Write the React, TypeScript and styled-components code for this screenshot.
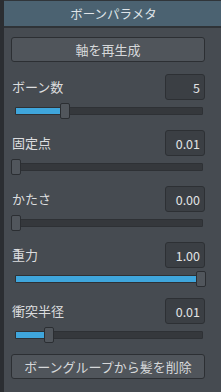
import React from 'react';
import styled, {createGlobalStyle} from 'styled-components';

const GlobalStyle = createGlobalStyle`
  html, body {
    margin: 0;
    padding: 0;
    background: #464b51;
  }
  body {
    font-family: "Noto Sans CJK JP", "Noto Sans", sans-serif;
  }
  * {
    box-sizing: border-box;
  }
`;

const Screen = styled.div`
  display: flex;
  width: 221px;
  height: 392px;
  overflow: hidden;
  background: #464b51;
`;

const SideStrip = styled.div`
  width: 4px;
  flex-shrink: 0;
  background: #2b2e32;
`;

const Panel = styled.div`
  flex: 1;
  display: flex;
  flex-direction: column;
`;

const Header = styled.div`
  height: 28px;
  border-top: 1px solid #30353a;
  border-bottom: 2px solid #2f3337;
  background: #4b6271;
  color: #dfe4e8;
  font-size: 12.5px;
  display: flex;
  align-items: center;
  justify-content: center;
  padding-left: 2px;
`;

const Body = styled.div`
  display: flex;
  flex-direction: column;
  padding: 9px 16px 0 7px;
`;

const ActionButton = styled.button<{$top?: number}>`
  height: 25px;
  margin-top: ${(p) => p.$top ?? 0}px;
  margin-bottom: 1px;
  background: #50555b;
  border: 1px solid #2c2f33;
  border-radius: 3px;
  color: #d6d8da;
  font-family: inherit;
  font-size: 13px;
  padding: 0;
`;

const Field = styled.div`
  display: flex;
  flex-direction: column;
  margin-top: 11px;
`;

const FieldHead = styled.div`
  display: flex;
  align-items: center;
  justify-content: space-between;
`;

const Label = styled.span`
  color: #dcdddf;
  font-size: 13px;
  padding-left: 1px;
  margin-top: -2px;
`;

const ValueBox = styled.div`
  width: 40px;
  height: 26px;
  background: #3b3f44;
  border: 1px solid #2d3034;
  border-radius: 3px;
  color: #e2e3e4;
  font-size: 12.5px;
  display: flex;
  align-items: center;
  justify-content: flex-end;
  padding-right: 4px;
`;

const SliderArea = styled.div`
  position: relative;
  height: 16px;
  margin: 3px 0 0 4px;
  width: 188px;
  display: flex;
  align-items: center;
`;

const Track = styled.div`
  width: 100%;
  height: 8px;
  background: #35383c;
  border: 1px solid #2e3135;
  border-radius: 1px;
  overflow: hidden;
`;

const Fill = styled.div`
  height: 100%;
  background: #3fa6dc;
`;

const Thumb = styled.div`
  position: absolute;
  top: 0;
  width: 10px;
  height: 16px;
  background: #51565c;
  border: 1px solid #2b2e32;
  border-radius: 2px;
  transform: translateX(-50%);
`;

interface Param {
  label: string;
  value: string;
  ratio: number;
}

const params: Param[] = [
  {label: 'ボーン数', value: '5', ratio: 0.265},
  {label: '固定点', value: '0.01', ratio: 0},
  {label: 'かたさ', value: '0.00', ratio: 0},
  {label: '重力', value: '1.00', ratio: 1},
  {label: '衝突半径', value: '0.01', ratio: 0.18},
];

const ParamField = ({label, value, ratio}: Param) => {
  // thumb centre runs from about 1px to 186px along the slider
  const pos = 1 + ratio * 185;
  return (
    <Field>
      <FieldHead>
        <Label>{label}</Label>
        <ValueBox>{value}</ValueBox>
      </FieldHead>
      <SliderArea>
        <Track>
          <Fill style={{width: `${ratio * 100}%`}} />
        </Track>
        <Thumb style={{left: `${pos}px`}} />
      </SliderArea>
    </Field>
  );
};

const App = () => (
  <>
    <GlobalStyle />
    <Screen>
      <SideStrip />
      <Panel>
        <Header>ボーンパラメタ</Header>
        <Body>
          <ActionButton>軸を再生成</ActionButton>
          {params.map((p) => (
            <ParamField key={p.label} {...p} />
          ))}
          <ActionButton $top={11}>ボーングループから髪を削除</ActionButton>
        </Body>
      </Panel>
    </Screen>
  </>
);

export default App;
